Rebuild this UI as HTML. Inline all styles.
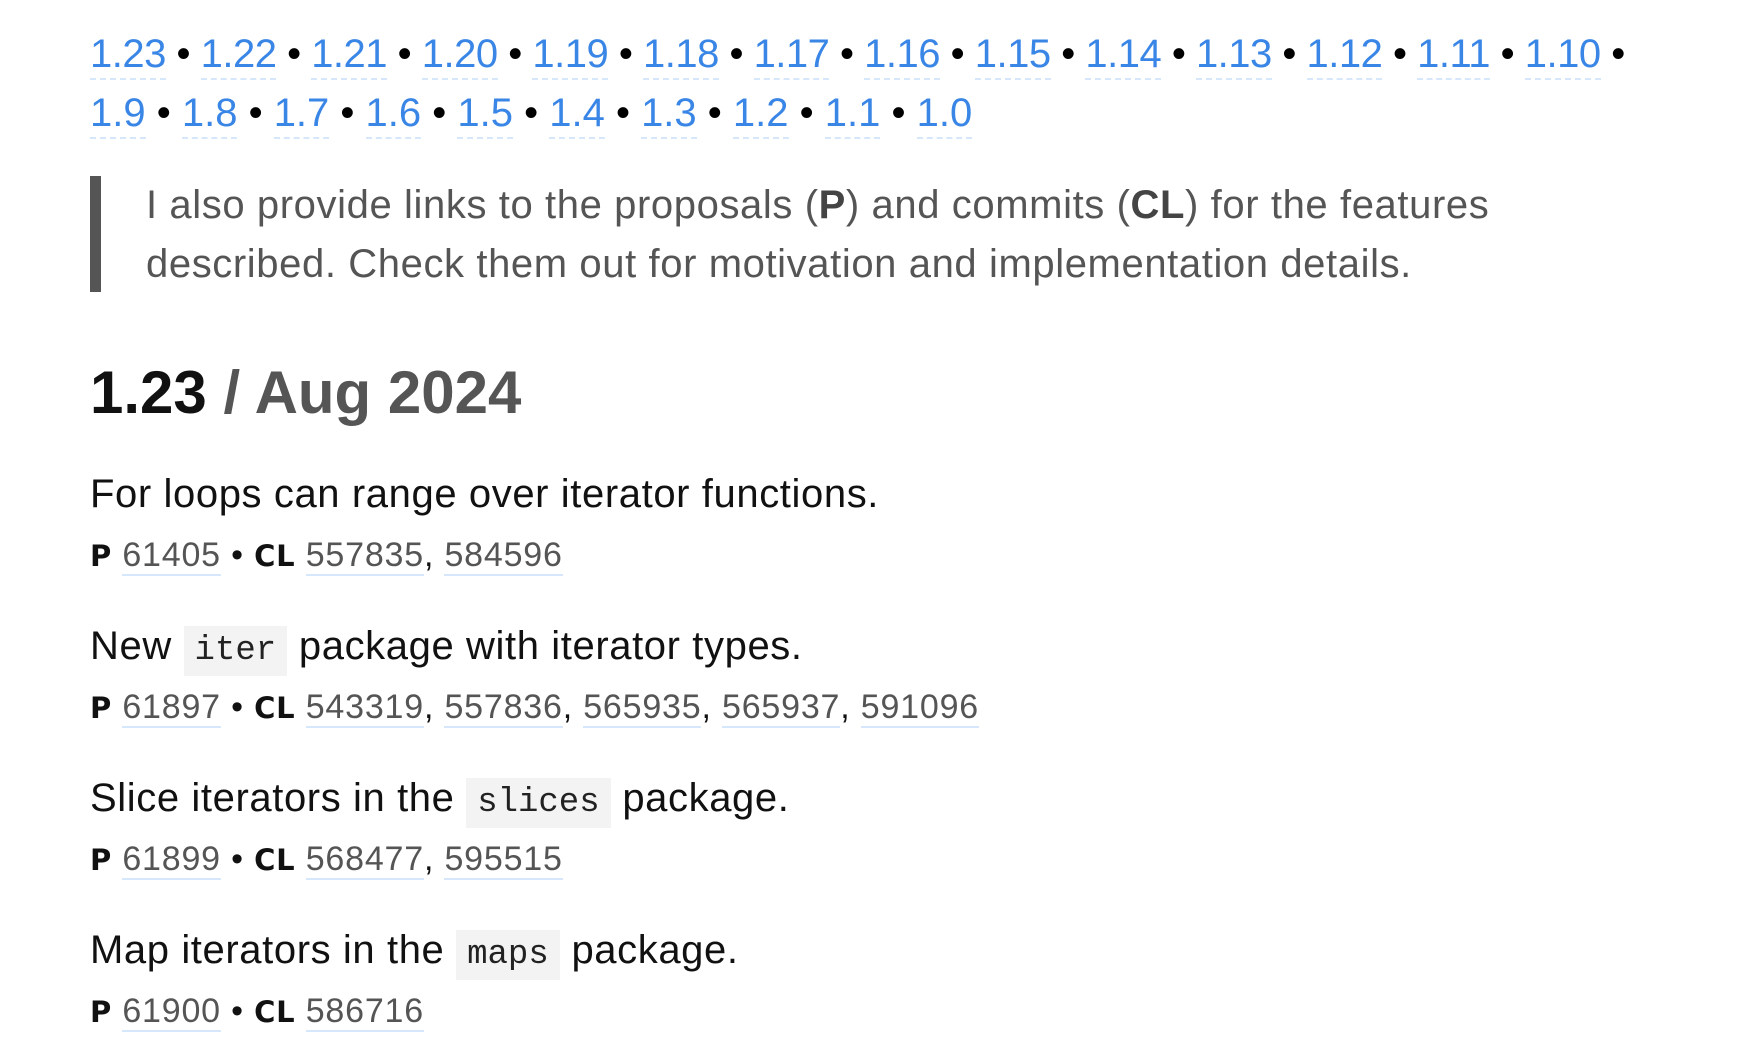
<!DOCTYPE html>
<html><head><meta charset="utf-8"><style>
body{margin:0;width:1750px;height:1062px;background:#fff;font-family:"Liberation Sans",sans-serif;overflow:hidden;position:relative}
.v{position:absolute;left:90px;font-size:40px;color:#000;white-space:nowrap;letter-spacing:0px}
.v a{color:#3a86e6;text-decoration:none;border-bottom:2px dashed #d6e6fb;padding-bottom:2px}
.bq{position:absolute;left:90px;top:176px;width:11px;height:116px;background:#555}
.bt{position:absolute;left:146px;top:176px;font-size:40px;line-height:59px;color:#555;width:1600px;letter-spacing:0.6px}
.bt b{color:#444}
h1{position:absolute;left:90px;top:358px;margin:0;font-size:60px;font-weight:bold;color:#111;letter-spacing:0px}
h1 span{color:#555}
.f{position:absolute;left:90px;font-size:40px;color:#111;white-space:nowrap;letter-spacing:0.6px}
.f code{font-family:"Liberation Mono",monospace;font-size:34px;background:#f3f3f3;padding:6px 11px;color:#222;letter-spacing:0}
.m{position:absolute;left:90px;font-size:34px;color:#111;white-space:nowrap;letter-spacing:0.8px}
.m b{font-family:"DejaVu Sans",sans-serif;font-size:29px}
.m a{color:#555;text-decoration:none;border-bottom:2px solid #d6e6fb}
</style></head><body>
<div class="v" style="top:32px;letter-spacing:-0.5px"><a>1.23</a> • <a>1.22</a> • <a>1.21</a> • <a>1.20</a> • <a>1.19</a> • <a>1.18</a> • <a>1.17</a> • <a>1.16</a> • <a>1.15</a> • <a>1.14</a> • <a>1.13</a> • <a>1.12</a> • <a>1.11</a> • <a>1.10</a> •</div>
<div class="v" style="top:91px"><a>1.9</a> • <a>1.8</a> • <a>1.7</a> • <a>1.6</a> • <a>1.5</a> • <a>1.4</a> • <a>1.3</a> • <a>1.2</a> • <a>1.1</a> • <a>1.0</a></div>
<div class="bq"></div>
<div class="bt">I also provide links to the proposals (<b>P</b>) and commits (<b>CL</b>) for the features<br>described. Check them out for motivation and implementation details.</div>
<h1>1.23 <span>/ Aug 2024</span></h1>
<div class="f" style="top:472px">For loops can range over iterator functions.</div>
<div class="m" style="top:536px"><b>P</b> <a>61405</a> • <b>CL</b> <a>557835</a>, <a>584596</a></div>
<div class="f" style="top:624px">New <code>iter</code> package with iterator types.</div>
<div class="m" style="top:688px"><b>P</b> <a>61897</a> • <b>CL</b> <a>543319</a>, <a>557836</a>, <a>565935</a>, <a>565937</a>, <a>591096</a></div>
<div class="f" style="top:776px">Slice iterators in the <code>slices</code> package.</div>
<div class="m" style="top:840px"><b>P</b> <a>61899</a> • <b>CL</b> <a>568477</a>, <a>595515</a></div>
<div class="f" style="top:928px">Map iterators in the <code>maps</code> package.</div>
<div class="m" style="top:992px"><b>P</b> <a>61900</a> • <b>CL</b> <a>586716</a></div>
</body></html>
